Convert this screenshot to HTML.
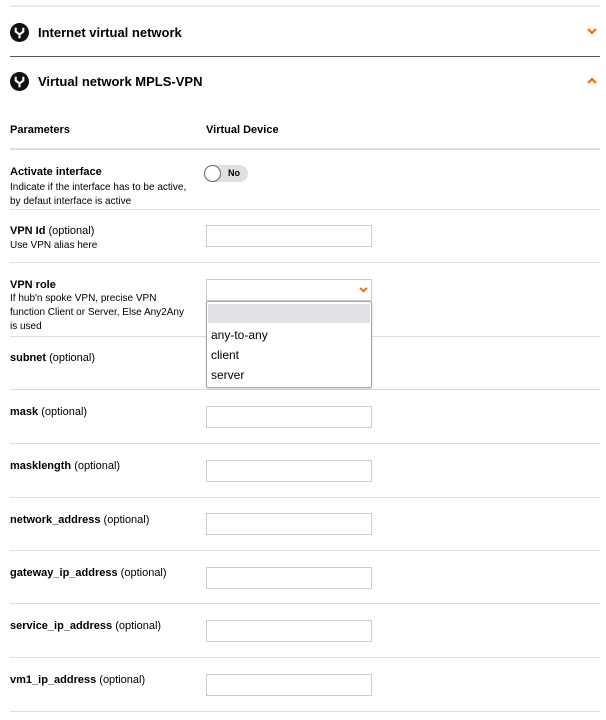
<!DOCTYPE html>
<html><head><style>
body{margin:0;width:606px;height:720px;background:#fff;font-family:"Liberation Sans",Arial,sans-serif;color:#000;position:relative;overflow:hidden}
.a{position:absolute}
.ln{position:absolute;left:10px;width:590px;height:1px;background:#ddd}
.h{font-size:13px;font-weight:bold;left:38px}
.lb{font-size:11px;left:10px;line-height:14px}
.lb b{font-weight:bold}
.ds{font-size:10px;left:10px;line-height:14px}
.in{position:absolute;left:206px;width:164px;height:20px;border:1px solid #ccc;background:#fff}
.ic{position:absolute;left:10px;width:19px;height:19px}
</style></head><body>
<div class="a" style="left:10px;top:5px;width:590px;height:2px;background:#ebebeb"></div>
<svg class="ic" style="top:23px" viewBox="0 0 20 20"><circle cx="10" cy="10" r="10" fill="#111"/><path d="M6 5v4l4 3 4-3V5M10 12v4" stroke="#fff" stroke-width="2.2" fill="none"/></svg>
<div class="a h" style="top:25px">Internet virtual network</div>
<svg class="a" style="left:587px;top:28px" width="10" height="7" viewBox="0 0 10 7"><path d="M1 1l4 4 4-4" stroke="#f60" stroke-width="2.2" fill="none"/></svg>
<div class="a" style="left:10px;top:56px;width:590px;height:1px;background:#555"></div>
<svg class="ic" style="top:72px" viewBox="0 0 20 20"><circle cx="10" cy="10" r="10" fill="#111"/><path d="M6 5v4l4 3 4-3V5M10 12v4" stroke="#fff" stroke-width="2.2" fill="none"/></svg>
<div class="a h" style="top:74px">Virtual network MPLS-VPN</div>
<svg class="a" style="left:587px;top:77px" width="10" height="7" viewBox="0 0 10 7"><path d="M1 6l4-4 4 4" stroke="#f60" stroke-width="2.2" fill="none"/></svg>

<div class="a lb" style="top:123px;font-weight:bold">Parameters</div>
<div class="a lb" style="top:123px;left:206px;font-weight:bold">Virtual Device</div>
<div class="ln" style="top:148px;height:2px"></div>

<div class="a lb" style="top:165px;font-weight:bold">Activate interface</div>
<div class="a ds" style="top:181px">Indicate if the interface has to be active,<br>by defaut interface is active</div>
<div class="a" style="left:204px;top:165px;width:44px;height:17px;border-radius:9px;background:#e0e0e0"></div>
<div class="a" style="left:204px;top:165px;width:15px;height:15px;border-radius:50%;background:#fff;border:1px solid #666"></div>
<div class="a" style="left:228px;top:168px;font-size:9px;font-weight:bold">No</div>
<div class="ln" style="top:209px"></div>

<div class="a lb" style="top:224px"><b>VPN Id</b> (optional)</div>
<div class="a ds" style="top:239px">Use VPN alias here</div>
<div class="in" style="top:225px"></div>
<div class="ln" style="top:262px"></div>

<div class="a lb" style="top:278px"><b>VPN role</b></div>
<div class="a ds" style="top:292px">If hub'n spoke VPN, precise VPN<br>function Client or Server, Else Any2Any<br>is used</div>
<div class="in" style="top:279px"></div>
<svg class="a" style="left:359px;top:287px" width="9" height="6" viewBox="0 0 10 7"><path d="M1 1l4 4 4-4" stroke="#f60" stroke-width="2.2" fill="none"/></svg>
<div class="ln" style="top:336px"></div>

<div class="a lb" style="top:351px"><b>subnet</b> (optional)</div>
<div class="in" style="top:352px"></div>
<div class="ln" style="top:389px"></div>

<div class="a" style="left:206px;top:301px;width:164px;height:85px;border:1px solid #aaa;border-radius:2px;background:#fff;font-size:12px;box-shadow:0 1px 2px rgba(0,0,0,.2)">
<div style="margin:2px 1px 0;height:19px;background:#e1e1e6"></div>
<div style="position:absolute;left:4px;top:26px">any-to-any</div>
<div style="position:absolute;left:4px;top:46px">client</div>
<div style="position:absolute;left:4px;top:66px">server</div>
</div>

<div class="a lb" style="top:405px"><b>mask</b> (optional)</div>
<div class="in" style="top:406px"></div>
<div class="ln" style="top:443px"></div>

<div class="a lb" style="top:459px"><b>masklength</b> (optional)</div>
<div class="in" style="top:460px"></div>
<div class="ln" style="top:497px"></div>

<div class="a lb" style="top:513px"><b>network_address</b> (optional)</div>
<div class="in" style="top:513px"></div>
<div class="ln" style="top:550px"></div>

<div class="a lb" style="top:566px"><b>gateway_ip_address</b> (optional)</div>
<div class="in" style="top:567px"></div>
<div class="ln" style="top:603px"></div>

<div class="a lb" style="top:619px"><b>service_ip_address</b> (optional)</div>
<div class="in" style="top:620px"></div>
<div class="ln" style="top:657px"></div>

<div class="a lb" style="top:673px"><b>vm1_ip_address</b> (optional)</div>
<div class="in" style="top:674px"></div>
<div class="ln" style="top:711px"></div>
</body></html>
